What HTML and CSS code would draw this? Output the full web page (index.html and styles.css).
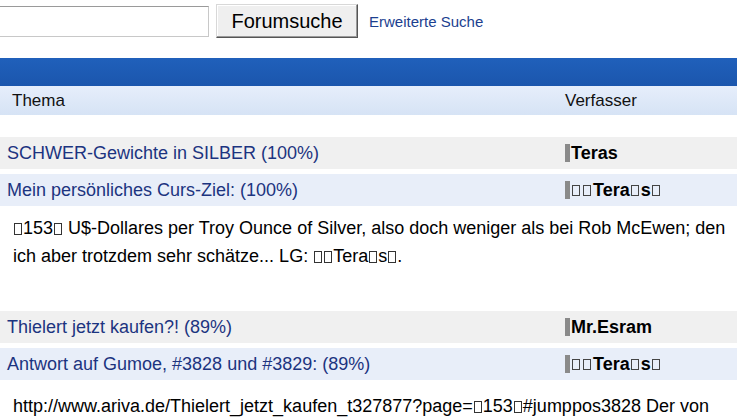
FILE: index.html
```html
<!DOCTYPE html>
<html lang="de">
<head>
<meta charset="utf-8">
<link rel="stylesheet" href="styles.css">
</head>
<body>
<div class="search">
  <input class="search-input" type="text">
  <button class="search-btn" type="button">Forumsuche</button>
  <a class="adv" href="#">Erweiterte Suche</a>
</div>
<div class="bluebar"></div>
<div class="head">
  <span class="col-thema">Thema</span>
  <span class="col-author">Verfasser</span>
</div>
<div class="results">
  <div class="row grey">
    <a class="title" href="#">SCHWER-Gewichte in SILBER (100%)</a>
    <span class="author"><i class="mark"></i>Teras</span>
  </div>
  <div class="row blue">
    <a class="title" href="#">Mein persönliches Curs-Ziel: (100%)</a>
    <span class="author"><i class="mark"></i><i class="tofu"></i><i class="tofu"></i>Tera<i class="tofu"></i>s<i class="tofu"></i></span>
  </div>
  <p class="excerpt first"><i class="tofu n"></i>153<i class="tofu n"></i> U$-Dollares per Troy Ounce of Silver, also doch weniger als bei Rob McEwen; den ich aber trotzdem sehr schätze... LG: <i class="tofu n"></i><i class="tofu n"></i>Tera<i class="tofu n"></i>s<i class="tofu n"></i>.</p>
  <div class="row grey">
    <a class="title" href="#">Thielert jetzt kaufen?! (89%)</a>
    <span class="author"><i class="mark"></i>Mr.Esram</span>
  </div>
  <div class="row blue">
    <a class="title" href="#">Antwort auf Gumoe, #3828 und #3829: (89%)</a>
    <span class="author"><i class="mark"></i><i class="tofu"></i><i class="tofu"></i>Tera<i class="tofu"></i>s<i class="tofu"></i></span>
  </div>
  <p class="excerpt last">http://www.ariva.de/Thielert_jetzt_kaufen_t327877?page=<i class="tofu n"></i>153<i class="tofu n"></i>#jumppos3828 Der von</p>
</div>
</body>
</html>
```
FILE: styles.css
```css
html, body { margin: 0; padding: 0; background: #fff; overflow: hidden; }
body { font-family: "Liberation Sans", Arial, sans-serif; color: #000; width: 737px; }

.search { display: flex; align-items: center; height: 42px; }
.search-input {
  width: 213px; height: 31px; box-sizing: border-box;
  margin: 0 0 0 -4px;
  border: 1px solid #c8c8c8; border-top-color: #9a9a9a; border-left-color: #9a9a9a;
  background: #fff; padding: 0;
}
.search-btn {
  margin-left: 7px; width: 142px; height: 34px; box-sizing: border-box;
  font-family: "Liberation Sans", Arial, sans-serif; font-size: 20px; color: #000;
  background: #efefef;
  border: 1px solid; border-color: #d8d8d8 #555 #555 #d8d8d8;
  box-shadow: inset -1px -1px 0 #9a9a9a, inset 1px 1px 0 #fff;
  padding: 0;
}
.adv { margin-left: 11px; font-size: 15px; color: #1c3f8f; text-decoration: none; }

.bluebar { margin-top: 16px; height: 28px; background: linear-gradient(#2060bb, #1b56ad); }
.head {
  display: flex; align-items: center; height: 29px;
  background: linear-gradient(#e6eefb, #d6e3f5);
  font-size: 17px; color: #111;
}
.col-thema { padding-left: 12px; width: 553px; }

.results { padding-top: 22px; }
.row { display: flex; align-items: center; height: 32px; margin-bottom: 5px; font-size: 18px; }
.row.grey { background: #f0f0f0; }
.row.blue { background: #e8eef9; }
.title { padding-left: 7px; width: 558px; color: #1c3480; text-decoration: none; }
.author { display: flex; align-items: center; font-weight: bold; color: #000; }
.mark { display: inline-block; width: 5px; height: 18px; background: #8a8a8a; margin-right: 1px; }
.tofu {
  display: inline-block; width: 8px; height: 11px; box-sizing: border-box;
  border: 1px solid #444; margin: 0 2px 0 1px;
}
.tofu.n { width: 8px; height: 12px; margin: 0 1px; vertical-align: -1px; border-color: #333; }

.excerpt {
  margin: 0; padding: 0 4px 0 13px; box-sizing: border-box;
  font-size: 18px; line-height: 28px; color: #000;
}
.excerpt.first { margin-top: -5px; height: 105px; padding-top: 8px; }
.excerpt.last { padding-top: 7px; }
```
